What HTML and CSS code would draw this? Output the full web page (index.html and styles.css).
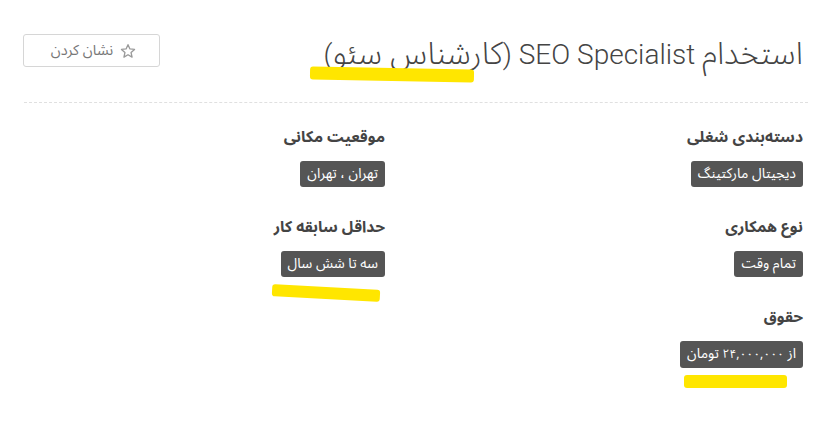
FILE: index.html
```html
<!DOCTYPE html>
<html lang="fa" dir="rtl">
<head>
<meta charset="utf-8">
<link rel="stylesheet" href="styles.css">
</head>
<body>
<div class="page">
  <header class="head">
    <h1 class="title"><span class="fa">استخدام</span> SEO Specialist (<span class="fa">کارشناس سئو</span>)</h1>
    <button class="mark">
      <svg class="star" width="16" height="16" viewBox="0 0 24 24"><path d="M12 2.5l2.9 6.4 6.9.7-5.2 4.7 1.5 6.9L12 17.6l-6.1 3.6 1.5-6.9-5.2-4.7 6.9-.7z" fill="none" stroke="#9a9a9a" stroke-width="2" stroke-linejoin="round"/></svg>
      <span>نشان کردن</span>
    </button>
    <span class="hl hl-title"></span>
  </header>
  <div class="grid">
    <div class="item">
      <div class="label">دسته‌بندی شغلی</div>
      <span class="badge">دیجیتال مارکتینگ</span>
    </div>
    <div class="item">
      <div class="label">موقعیت مکانی</div>
      <span class="badge">تهران ، تهران</span>
    </div>
    <div class="item">
      <div class="label">نوع همکاری</div>
      <span class="badge">تمام وقت</span>
    </div>
    <div class="item">
      <div class="label">حداقل سابقه کار</div>
      <span class="badge">سه تا شش سال<span class="hl hl-exp"></span></span>
    </div>
    <div class="item">
      <div class="label">حقوق</div>
      <span class="badge">از <span class="num">۲۴,۰۰۰,۰۰۰</span> تومان<span class="hl hl-sal"></span></span>
    </div>
  </div>
</div>
</body>
</html>
```
FILE: styles.css
```css
html, body {
  margin: 0;
  padding: 0;
  background: #fff;
}
body {
  font-family: Roboto, "Noto Sans Arabic", "DejaVu Sans", sans-serif;
  color: #444;
  width: 832px;
  height: 428px;
  overflow: hidden;
}
.page {
  padding: 0 24px;
}
.head {
  position: relative;
  display: flex;
  justify-content: space-between;
  align-items: flex-start;
  padding: 34px 5px 0 0;
  height: 68px;
  border-bottom: 1px dashed #e0e0e0;
}
.title {
  margin: 0;
  margin-top: 2px;
  font-weight: 300;
  font-size: 28px;
  line-height: 36px;
  color: #444;
  white-space: nowrap;
}
.title .fa {
  font-size: 31.5px;
}
.mark {
  display: flex;
  align-items: center;
  gap: 7px;
  width: 137px;
  height: 33px;
  box-sizing: border-box;
  justify-content: center;
  border: 1px solid #d6d6d6;
  border-radius: 3px;
  background: #fff;
  color: #777;
  font-family: "Noto Sans Arabic", "DejaVu Sans", sans-serif;
  font-size: 14.5px;
  padding: 0 0 0 4px;
  margin-left: -1px;
}
.grid {
  display: grid;
  grid-template-columns: 418px 1fr;
  padding: 22px 5px 0 0;
  row-gap: 28px;
}
.item {
  display: flex;
  flex-direction: column;
  align-items: flex-start;
}
.label {
  font-family: "Noto Sans Arabic", "DejaVu Sans", sans-serif;
  font-weight: bold;
  font-size: 15.6px;
  line-height: 26px;
  color: #444;
  margin-bottom: 10px;
}
.badge {
  position: relative;
  display: inline-block;
  background: #555;
  color: #fff;
  font-family: "Noto Sans Arabic", "DejaVu Sans", sans-serif;
  font-size: 14px;
  line-height: 26px;
  padding: 0 7px;
  border-radius: 3px;
}
.num {
  font-size: 12px;
  letter-spacing: -1.6px;
}
.hl {
  position: absolute;
  background: #ffe600;
  border-radius: 3px;
}
.hl-title {
  left: 286px;
  top: 68px;
  width: 164px;
  height: 13px;
  transform: rotate(1deg);
}
.hl-exp {
  left: -9px;
  top: 36px;
  width: 108px;
  height: 12px;
  transform: rotate(3deg);
}
.hl-sal {
  left: 4px;
  top: 34px;
  width: 103px;
  height: 13px;
}
```
